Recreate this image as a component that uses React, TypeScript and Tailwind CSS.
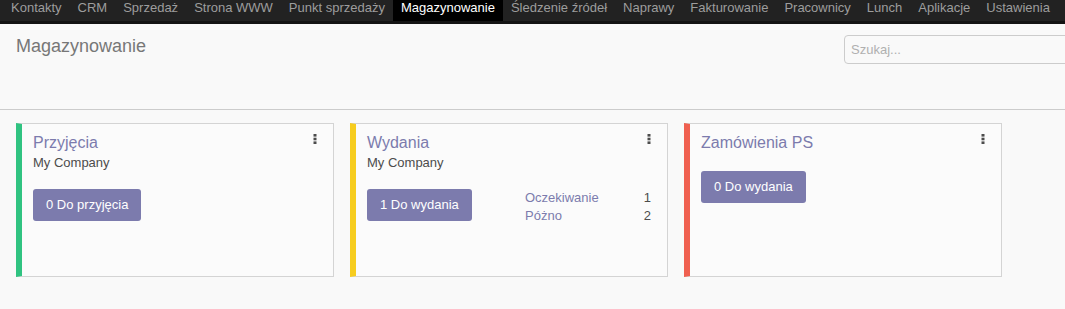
import React from "react";

const navItems = [
  "Kontakty",
  "CRM",
  "Sprzedaż",
  "Strona WWW",
  "Punkt sprzedaży",
  "Magazynowanie",
  "Śledzenie źródeł",
  "Naprawy",
  "Fakturowanie",
  "Pracownicy",
  "Lunch",
  "Aplikacje",
  "Ustawienia",
];

function Kebab() {
  return (
    <svg width="4" height="10" viewBox="0 0 4 10" className="mt-[1px] shrink-0">
      <rect x="0.5" y="0" width="3" height="2.6" fill="#4c4c4c" />
      <rect x="0.5" y="3.7" width="3" height="2.6" fill="#4c4c4c" />
      <rect x="0.5" y="7.4" width="3" height="2.6" fill="#4c4c4c" />
    </svg>
  );
}

function Card({
  title,
  subtitle,
  bar,
  button,
  stats,
}: {
  title: string;
  subtitle?: string;
  bar: string;
  button: string;
  stats?: { label: string; value: string }[];
}) {
  return (
    <div
      className={`w-[318px] h-[154px] shrink-0 border border-[#d4d4d4] border-l-[6px] ${bar} bg-[#fbfbfb] pl-[11px] pr-[16px] pt-[9px] flex flex-col`}
    >
      <div className="flex justify-between items-start">
        <div>
          <div className="text-[16px] leading-[19px] text-[#7c7bad]">{title}</div>
          {subtitle && (
            <div className="mt-[2px] text-[13px] leading-[18px] text-[#4c4c4c]">{subtitle}</div>
          )}
        </div>
        <Kebab />
      </div>
      <div className={`flex ${subtitle ? "mt-[17px]" : "mt-[19px]"}`}>
        <div className="w-[158px] shrink-0">
          <button className="h-[32px] px-[13px] bg-[#7c7bad] text-white text-[13px] leading-[18px] rounded-[3px]">
            {button}
          </button>
        </div>
        {stats && (
          <div className="flex-1">
            {stats.map((s) => (
              <div key={s.label} className="flex justify-between text-[13px] leading-[18px]">
                <span className="text-[#7c7bad]">{s.label}</span>
                <span className="text-[#4c4c4c]">{s.value}</span>
              </div>
            ))}
          </div>
        )}
      </div>
    </div>
  );
}

export default function App() {
  return (
    <div
      className="w-full h-[309px] overflow-hidden bg-[#f9f9f9]"
      style={{ fontFamily: '"Liberation Sans", Arial, sans-serif' }}
    >
      <nav className="h-[24px] bg-[#222222] border-b-[3px] border-[#141414] flex pl-[3px]">
        {navItems.map((item) => (
          <div
            key={item}
            className={`h-[21px] px-[8px] text-[13px] leading-[16px] whitespace-nowrap ${
              item === "Magazynowanie" ? "bg-black text-white" : "text-[#9d9d9d]"
            }`}
          >
            {item}
          </div>
        ))}
      </nav>
      <div className="h-[86px] border-b border-[#cccccc] flex items-start pl-[16px] pt-[11px]">
        <div className="flex-1 text-[18px] leading-[20px] text-[#777777] mt-[1px]">Magazynowanie</div>
        <div className="w-[240px] shrink-0 mr-[-19px] h-[29px] border border-[#cccccc] rounded-[4px] flex items-center pl-[6px] text-[13px] text-[#b0b0b0]">
          Szukaj...
        </div>
      </div>
      <div className="flex gap-[16px] pl-[16px] pt-[13px]">
        <Card
          title="Przyjęcia"
          subtitle="My Company"
          bar="border-l-[#30c381]"
          button="0 Do przyjęcia"
        />
        <Card
          title="Wydania"
          subtitle="My Company"
          bar="border-l-[#f7cd1f]"
          button="1 Do wydania"
          stats={[
            { label: "Oczekiwanie", value: "1" },
            { label: "Póżno", value: "2" },
          ]}
        />
        <Card title="Zamówienia PS" bar="border-l-[#f06050]" button="0 Do wydania" />
      </div>
    </div>
  );
}
